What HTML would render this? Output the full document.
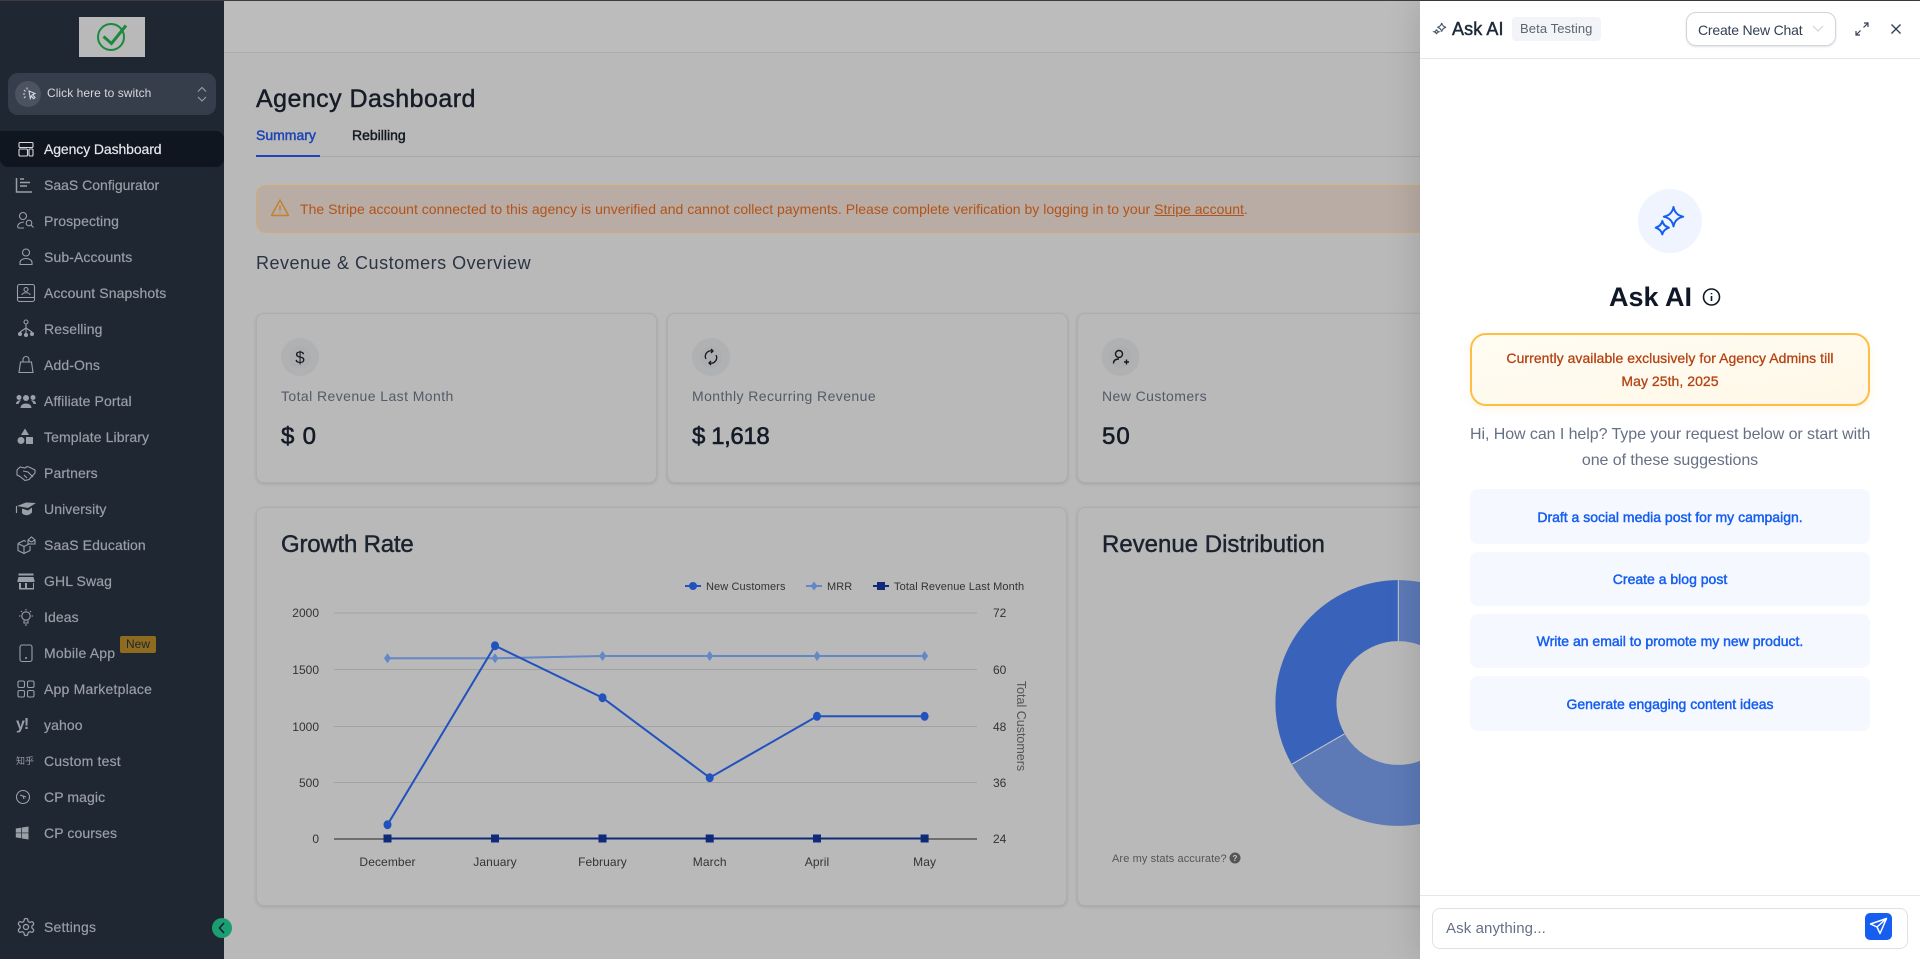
<!DOCTYPE html>
<html lang="en"><head><meta charset="utf-8"><title>Agency Dashboard</title>
<style>
*{box-sizing:border-box}
html,body{margin:0;padding:0;width:1920px;height:959px;overflow:hidden;background:#b9b9b9;font-family:"Liberation Sans",sans-serif}
.t{position:absolute;white-space:nowrap;line-height:20px;transform:translateY(-10px)}
.m{-webkit-text-stroke:.3px currentColor}
.box{position:absolute}
.nav{position:absolute;left:44px;font-size:14px;line-height:20px;color:#9a9ea6;white-space:nowrap;transform:translateY(-10px);letter-spacing:.1px;-webkit-text-stroke:.2px currentColor}
.card{position:absolute;background:#b9b9b9;border:1.5px solid #adadae;border-radius:8px;box-shadow:0 1px 3px rgba(0,0,0,.12)}
.lab{color:#535a68;font-size:14px;letter-spacing:.42px}
.val{color:#141b26;font-size:24px;-webkit-text-stroke:.6px currentColor}
.sug{position:absolute;left:1470px;width:400px;background:#f5f8ff;border-radius:8px;display:flex;align-items:center;justify-content:center;font-size:14px;color:#155eef;-webkit-text-stroke:.45px currentColor}
svg{position:absolute;overflow:visible}
</style></head><body>

<!-- main -->
<div class="box" style="left:224px;top:0;width:1200px;height:53px;background:#bcbcbc;border-bottom:1px solid #ababab"></div>
<div class="t" style="left:256px;top:99px;font-size:25px;color:#151c27;letter-spacing:.45px;-webkit-text-stroke:.45px currentColor">Agency Dashboard</div>
<div class="t" style="left:256px;top:135px;font-size:14px;color:#1d46b4;-webkit-text-stroke:.45px currentColor">Summary</div>
<div class="t" style="left:352px;top:135px;font-size:14px;color:#131a25;-webkit-text-stroke:.45px currentColor">Rebilling</div>
<div class="box" style="left:256px;top:156px;width:1170px;height:1px;background:#a6a8ae"></div>
<div class="box" style="left:256px;top:155px;width:64px;height:2px;background:#1d46b4"></div>

<div class="box" style="left:256px;top:185px;width:1180px;height:48px;background:#b8aca4;border:1px solid #d1ab72;border-radius:10px"></div>
<div class="t" id="al" style="left:300px;top:209px;font-size:14px;color:#b3531a;letter-spacing:.02px">The Stripe account connected to this agency is unverified and cannot collect payments. Please complete verification by logging in to your <u>Stripe account</u>.</div>
<div class="t" style="left:256px;top:263px;font-size:18px;color:#2b3444;letter-spacing:.5px">Revenue &amp; Customers Overview</div>

<div class="card" style="left:256px;top:313px;width:401px;height:170px"></div>
<div class="card" style="left:667px;top:313px;width:401px;height:170px"></div>
<div class="card" style="left:1077px;top:313px;width:420px;height:170px"></div>

<div class="t lab" style="left:281px;top:396px">Total Revenue Last Month</div>
<div class="t val" style="left:281px;top:436.500px;letter-spacing:.8px">$ 0</div>
<div class="t lab" style="left:692px;top:396px">Monthly Recurring Revenue</div>
<div class="t val" style="left:692px;top:436.500px;letter-spacing:-.4px">$ 1,618</div>
<div class="t lab" style="left:1102px;top:396px">New Customers</div>
<div class="t val" style="left:1102px;top:436.500px;letter-spacing:1px">50</div>

<div class="card" style="left:256px;top:507px;width:811px;height:399px"></div>
<div class="card" style="left:1077px;top:507px;width:420px;height:399px"></div>
<div class="t" style="left:281px;top:545px;font-size:24px;color:#1b232e;letter-spacing:-.2px;-webkit-text-stroke:.45px currentColor">Growth Rate</div>
<div class="t" style="left:1102px;top:545px;font-size:24px;color:#1b232e;-webkit-text-stroke:.45px currentColor">Revenue Distribution</div>

<svg width="1920" height="959" style="left:0;top:0" font-family="Liberation Sans, sans-serif">
 <!-- card icons -->
 <g><circle cx="300" cy="357" r="19" fill="#b0b1b3"/><circle cx="300" cy="357" r="11" fill="#adaeb0"/>
 <text x="300" y="363" font-size="17" text-anchor="middle" fill="#15191f">$</text></g>
 <g><circle cx="711" cy="357" r="19" fill="#b0b1b3"/><circle cx="711" cy="357" r="11" fill="#adaeb0"/>
 <path d="M706 359a5.500 5.500 0 0 1 6-8M716 355a5.500 5.500 0 0 1-6 8M711 349l2 2-2 2M711 361l-2 2 2 2" fill="none" stroke="#15191f" stroke-width="1.300"/></g>
 <g><circle cx="1120.500" cy="357" r="19" fill="#b0b1b3"/><circle cx="1120.500" cy="357" r="11" fill="#adaeb0"/>
 <circle cx="1119" cy="354" r="3.500" fill="none" stroke="#15191f" stroke-width="1.400"/><path d="M1113.500 363.500c0-3 2-4.500 5.500-4.500M1124 362h5M1126.500 359.500v5" fill="none" stroke="#15191f" stroke-width="1.400"/></g>
 <!-- alert icon -->
 <path d="M280 200l-8.500 15.500h17zM280 205.500v5M280 212.500v.8" fill="none" stroke="#c4802a" stroke-width="1.400" stroke-linejoin="round"/>

 <!-- chart -->
 <g stroke="#a2a2a2" stroke-width="1"><path d="M334 613H977M334 669.500H977M334 726.500H977M334 782.500H977"/></g>
 <path d="M334 839H977" stroke="#222" stroke-width="1"/>
 <g font-size="12" fill="#333" text-anchor="end"><text x="319" y="617">2000</text><text x="319" y="674">1500</text><text x="319" y="731">1000</text><text x="319" y="787">500</text><text x="319" y="843">0</text></g>
 <g font-size="12" fill="#333"><text x="993" y="617">72</text><text x="993" y="674">60</text><text x="993" y="731">48</text><text x="993" y="787">36</text><text x="993" y="843">24</text></g>
 <g font-size="12" fill="#333" text-anchor="middle" letter-spacing=".1"><text x="387.500" y="866">December</text><text x="495" y="866">January</text><text x="602.500" y="866">February</text><text x="709.700" y="866">March</text><text x="817" y="866">April</text><text x="924.600" y="866">May</text></g>
 <text transform="translate(1017,726) rotate(90)" font-size="12.500" fill="#555" text-anchor="middle">Total Customers</text>
 <polyline points="387.500,658.300 495,658.300 602.500,656 709.700,656 817,656 924.600,656" fill="none" stroke="#6488c7" stroke-width="2"/>
 <g fill="#6488c7"><path d="M387.500 653.300l3.500 5-3.500 5-3.500-5zM495 653.300l3.500 5-3.500 5-3.500-5zM602.500 651l3.500 5-3.500 5-3.500-5zM709.700 651l3.500 5-3.500 5-3.500-5zM817 651l3.500 5-3.500 5-3.500-5zM924.600 651l3.500 5-3.500 5-3.500-5z"/></g>
 <polyline points="387.500,824.700 495,645.700 602.500,697.700 709.700,777.700 817,716.300 924.600,716.300" fill="none" stroke="#2152bd" stroke-width="2"/>
 <g fill="#2152bd"><ellipse cx="387.500" cy="824.700" rx="4" ry="4.500"/><ellipse cx="495" cy="645.700" rx="4" ry="4.500"/><ellipse cx="602.500" cy="697.700" rx="4" ry="4.500"/><ellipse cx="709.700" cy="777.700" rx="4" ry="4.500"/><ellipse cx="817" cy="716.300" rx="4" ry="4.500"/><ellipse cx="924.600" cy="716.300" rx="4" ry="4.500"/></g>
 <path d="M387.500 838.500H924.600" stroke="#0e2a78" stroke-width="2"/>
 <g fill="#0e2a78"><rect x="383.500" y="834.500" width="8" height="8"/><rect x="491" y="834.500" width="8" height="8"/><rect x="598.500" y="834.500" width="8" height="8"/><rect x="705.700" y="834.500" width="8" height="8"/><rect x="813" y="834.500" width="8" height="8"/><rect x="920.600" y="834.500" width="8" height="8"/></g>
 <!-- legend -->
 <path d="M685 586h16" stroke="#2152bd" stroke-width="2"/><circle cx="693" cy="586" r="4" fill="#2152bd"/>
 <path d="M806 586h16" stroke="#6488c7" stroke-width="2"/><path d="M814 581.500l3.500 4.500-3.500 4.500-3.500-4.500z" fill="#6488c7"/>
 <path d="M873 586h16" stroke="#0e2a78" stroke-width="2"/><rect x="877" y="582" width="8" height="8" fill="#0e2a78"/>
 <g font-size="11" fill="#333" letter-spacing=".1"><text x="706" y="590">New Customers</text><text x="827" y="590">MRR</text><text x="894" y="590">Total Revenue Last Month</text></g>

 <!-- donut -->
 <circle cx="1398.300" cy="703" r="92.400" fill="none" stroke="#5d7ab7" stroke-width="61"/>
 <path d="M1398.300 580.300A122.700 122.700 0 0 0 1291.900 764.200L1344.600 733.800A62 62 0 0 1 1398.300 641Z" fill="#3963bb"/>
 <path d="M1398.300 580.300V641M1291.900 764.200L1344.600 733.800" stroke="#c9c9c9" stroke-width="1"/>
 <text x="1112" y="862" font-size="11" fill="#555" letter-spacing=".1">Are my stats accurate?</text>
 <circle cx="1235" cy="858" r="5.500" fill="#555"/><text x="1235" y="861" font-size="8" font-weight="700" fill="#c9c9c9" text-anchor="middle">?</text>
</svg>

<!-- sidebar -->
<div class="box" style="left:0;top:0;width:224px;height:959px;background:#1f2733"></div>
<div class="box" style="left:0;top:0;width:1920px;height:1px;background:#3c3c3c"></div>
<div class="box" style="left:79px;top:17px;width:66px;height:40px;background:#b9b9b9"></div>
<div class="box" style="left:8px;top:73px;width:208px;height:42px;background:#373e4b;border-radius:10px"></div>
<div class="box" style="left:15px;top:81px;width:26px;height:26px;background:#4b5260;border-radius:50%"></div>
<div class="t" style="left:47px;top:93px;font-size:12px;color:#d5d7db;letter-spacing:.05px">Click here to switch</div>
<div class="box" style="left:0;top:131px;width:224px;height:36px;background:#0f161f;border-radius:0 8px 8px 8px"></div>

<div class="nav" style="top:149px;color:#e5e7eb;letter-spacing:-.1px">Agency Dashboard</div>
<div class="nav" style="top:185px;letter-spacing:0">SaaS Configurator</div>
<div class="nav" style="top:221px">Prospecting</div>
<div class="nav" style="top:257px">Sub-Accounts</div>
<div class="nav" style="top:293px">Account Snapshots</div>
<div class="nav" style="top:329px">Reselling</div>
<div class="nav" style="top:365px">Add-Ons</div>
<div class="nav" style="top:401px">Affiliate Portal</div>
<div class="nav" style="top:437px">Template Library</div>
<div class="nav" style="top:473px">Partners</div>
<div class="nav" style="top:509px">University</div>
<div class="nav" style="top:545px">SaaS Education</div>
<div class="nav" style="top:581px">GHL Swag</div>
<div class="nav" style="top:617px">Ideas</div>
<div class="nav" style="top:653px;letter-spacing:.2px">Mobile App</div>
<div class="nav" style="top:689px;letter-spacing:.2px">App Marketplace</div>
<div class="nav" style="top:725px">yahoo</div>
<div class="nav" style="top:761px;letter-spacing:.2px">Custom test</div>
<div class="nav" style="top:797px">CP magic</div>
<div class="nav" style="top:833px">CP courses</div>
<div class="nav" style="top:927px;letter-spacing:.2px">Settings</div>
<div class="box" style="left:120px;top:636px;width:36px;height:17px;background:#8e6b1e;border-radius:2px;color:#1f2733;font-size:12px;line-height:16px;text-align:center">New</div>
<div class="t" style="left:16px;top:725px;font-size:16px;font-weight:700;color:#9a9ea6;letter-spacing:-1px">y!</div>
<div class="t" style="left:16px;top:761px;font-size:9px;color:#9a9ea6;font-family:'Liberation Sans','Noto Sans CJK SC',sans-serif">知乎</div>

<svg width="240" height="959" style="left:0;top:0">
 <circle cx="111" cy="37" r="13" fill="none" stroke="#1a8a3f" stroke-width="2"/>
 <path d="M103.500 36.500l8 7L126 25.500" fill="none" stroke="#1a8a3f" stroke-width="3"/>
 <g fill="none" stroke="#d5d7db" stroke-width="1.100"><path d="M29 91l6 2.500-2.500 1.200 2.500 2.800-1.500 1.200-2.200-2.800-1 2.500zM24 90l1.500 1.500M23 94h2M27 87.500v2M24 98l1.500-1.500"/>
 <path d="M198 91.500l4-4 4 4M198 97l4 4 4-4" stroke="#9a9ea6"/></g>
 <g fill="none" stroke="#9aa0a8" stroke-width="1.100">
  <g transform="translate(26,149)" stroke="#d5d7db"><rect x="-7" y="-6.500" width="14" height="5" rx="1"/><rect x="-7" y="0" width="8.500" height="7" rx="1"/><rect x="3" y="0" width="4" height="7" rx="1"/></g>
  <g transform="translate(24,185)"><path d="M-7.500-7V7H8M-4-6h4M-4-2.500H6M-4 1h7" stroke-width="1.500"/></g>
  <g transform="translate(26,221)"><circle cx="-3" cy="-5" r="3.500"/><path d="M-2 7H-7c-1.500 0-1.500-1.500-1-3 1-2 4-3 6-3"/><circle cx="3" cy="2" r="2.800"/><path d="M5 4l2.500 2.500"/></g>
  <g transform="translate(26,257)"><circle cx="0" cy="-4.500" r="3.500"/><path d="M-6 7.500V5.500c0-2.500 3-4 6-4s6 1.500 6 4v2z"/></g>
  <g transform="translate(26,293)"><rect x="-8.500" y="-8.500" width="17" height="17" rx="2"/><path d="M-8.500 4.500h17M-4 2c0-3 8-3 8 0"/><circle cx="0" cy="-3.500" r="2"/></g>
  <g transform="translate(26,329)"><circle cx="0" cy="-7" r="2"/><path d="M0-5V5M0-1l-6 4M0-1l6 4"/><circle cx="-6" cy="5" r="1.500" fill="#9aa0a8"/><circle cx="0" cy="6" r="1.500" fill="#9aa0a8"/><circle cx="6" cy="5" r="1.500" fill="#9aa0a8"/></g>
  <g transform="translate(26,365)"><path d="M-5.500-3h11l1.500 10.500h-14zM-3-3v-2.500a3 3 0 0 1 6 0V-3"/></g>
  <g transform="translate(26,473)"><path d="M-9-3l3-3 5 1 2-1.500 3 1 5 2.500v3L3 6.500-1 7.500-6 3.500-9 2zM-3-2l5 1 5 5M-2 2l3 3"/></g>
  <g transform="translate(26,545)"><path d="M-8-1.500l6-3 2 1M-8-1.500v7l6 3 6-3V1M-8-1.500l6 3 6-3M-2 1.500v7M2-5l3.500-3 3.500 3v4h-7zM2-5l3.500 2L9-5"/></g>
  <g transform="translate(26,617)"><circle cx="0" cy="-1" r="4.200"/><path d="M-2 3.500V6h4V3.500M0-8v1.500M-7-1h1.500M7-1H5.500M-5-6l1 1M5-6l-1 1M-1 8h2"/></g>
  <g transform="translate(26,653)"><rect x="-6" y="-8" width="12" height="16.500" rx="2"/><circle cx="0" cy="5" r=".5" fill="#9aa0a8"/></g>
  <g transform="translate(26,689)"><rect x="-8" y="-8" width="6.500" height="6.500" rx="1.500"/><rect x="1.500" y="-8" width="6.500" height="6.500" rx="1.500"/><rect x="-8" y="1.500" width="6.500" height="6.500" rx="1.500"/><rect x="1.500" y="1.500" width="6.500" height="6.500" rx="1.500"/></g>
  <g transform="translate(23,797)"><circle cx="0" cy="0" r="6.500"/><path d="M-3-2l6 2M0-1l1 3"/></g>
 </g>
 <g fill="#9aa0a8">
  <g transform="translate(26,401)"><circle cx="0" cy="-3" r="3"/><circle cx="-7" cy="-3.500" r="2.500"/><circle cx="7" cy="-3.500" r="2.500"/><path d="M-5.500 7c0-6 11-6 11 0zM-10 3c0-3 3-4 5-3.500-1.500 1-2 2-2.500 3.500zM10 3c0-3-3-4-5-3.500 1.500 1 2 2 2.500 3.500z"/></g>
  <g transform="translate(25,437)"><path d="M0-8.500L4-2H-4z"/><circle cx="-4" cy="3.500" r="3.500"/><rect x="1" y="0" width="7" height="7" rx=".5"/></g>
  <g transform="translate(26,509)"><path d="M-9-3L0-6.500 10-6 2-1zM-4-.5L2 1.500 6-1.500V3.500C3 7-2 7-4 4z"/><path d="M-9.500-3V4" stroke="#9aa0a8" stroke-width="1.200"/></g>
  <g transform="translate(26,581)"><rect x="-7.500" y="-7.500" width="15" height="2"/><path d="M-7.500-4h15l1 3.500V1h-17V-.5zM-7 2h2V7h4V2h2V7h6V2h1V8.500H-7z"/></g>
  <g transform="translate(22,833)"><path d="M-6.200-4.500l5.500-.9V-.4h-5.500zM0-5.500l6.500-1V-.4H0zM-6.200.3h5.500v5l-5.500-.9zM0 .3h6.500v6.200l-6.500-1z"/></g>
 </g>
 <g transform="translate(15.800,916.800) scale(.85)" fill="none" stroke="#9aa0a8" stroke-width="1.500"><path d="M12.220 2h-.44a2 2 0 0 0-2 2v.18a2 2 0 0 1-1 1.730l-.43.25a2 2 0 0 1-2 0l-.15-.08a2 2 0 0 0-2.730.73l-.22.38a2 2 0 0 0 .73 2.730l.15.1a2 2 0 0 1 1 1.720v.51a2 2 0 0 1-1 1.740l-.15.09a2 2 0 0 0-.73 2.730l.22.38a2 2 0 0 0 2.730.73l.15-.08a2 2 0 0 1 2 0l.43.25a2 2 0 0 1 1 1.730V20a2 2 0 0 0 2 2h.44a2 2 0 0 0 2-2v-.18a2 2 0 0 1 1-1.730l.43-.25a2 2 0 0 1 2 0l.15.08a2 2 0 0 0 2.730-.73l.22-.39a2 2 0 0 0-.73-2.730l-.15-.08a2 2 0 0 1-1-1.740v-.5a2 2 0 0 1 1-1.740l.15-.09a2 2 0 0 0 .73-2.730l-.22-.38a2 2 0 0 0-2.730-.73l-.15.08a2 2 0 0 1-2 0l-.43-.25a2 2 0 0 1-1-1.730V4a2 2 0 0 0-2-2z"/><circle cx="12" cy="12" r="3"/></g>
 <circle cx="222" cy="928" r="10" fill="#1b9e72"/><path d="M224 923l-4.500 5 4.500 5" fill="none" stroke="#123" stroke-width="1.600"/>
</svg>

<!-- panel -->
<div class="box" style="left:1420px;top:1px;width:500px;height:958px;background:#fff;box-shadow:-4px 0 30px rgba(0,0,0,.12)"></div>
<div class="box" style="left:1420px;top:58px;width:500px;height:1px;background:#e5e7eb"></div>
<div class="t" style="left:1452px;top:29px;font-size:18px;color:#1d2939;letter-spacing:.1px;-webkit-text-stroke:.45px currentColor">Ask AI</div>
<div class="box" style="left:1512px;top:17px;width:89px;height:24px;background:#f2f4f7;border-radius:4px"></div>
<div class="t" style="left:1520px;top:29px;font-size:13px;color:#5c6573;letter-spacing:.1px">Beta Testing</div>
<div class="box" style="left:1686px;top:12px;width:150px;height:34px;border:1px solid #d0d5dd;border-radius:10px;box-shadow:0 1px 2px rgba(16,24,40,.12)"></div>
<div class="t" style="left:1698px;top:29.500px;font-size:14px;color:#344054;letter-spacing:-.2px">Create New Chat</div>
<div class="box" style="left:1638px;top:189px;width:64px;height:64px;border-radius:50%;background:#eff4ff"></div>
<div class="t" style="left:1609px;top:297px;font-size:27px;font-weight:700;color:#101828;line-height:30px;transform:translateY(-15px)">Ask AI</div>
<div class="box" style="left:1470px;top:333px;width:400px;height:73px;background:linear-gradient(170deg,#fffcf3,#fff8e8);border:2px solid #fdbe46;border-radius:16px;box-shadow:0 3px 8px rgba(253,190,70,.15)"></div>
<div class="t m" style="left:1470px;width:400px;top:358px;text-align:center;font-size:14px;color:#b54212;letter-spacing:.05px">Currently available exclusively for Agency Admins till</div>
<div class="t m" style="left:1470px;width:400px;top:381px;text-align:center;font-size:14px;color:#b54212;letter-spacing:.05px">May 25th, 2025</div>
<div class="t" style="left:1470px;width:400px;top:434.500px;text-align:center;font-size:16px;color:#667085;letter-spacing:-.07px">Hi, How can I help? Type your request below or start with</div>
<div class="t" style="left:1470px;width:400px;top:460.500px;text-align:center;font-size:16px;color:#667085;letter-spacing:-.07px">one of these suggestions</div>
<div class="sug" style="top:489px;height:55px">Draft a social media post for my campaign.</div>
<div class="sug" style="top:552px;height:54px">Create a blog post</div>
<div class="sug" style="top:614px;height:54px">Write an email to promote my new product.</div>
<div class="sug" style="top:676px;height:55px">Generate engaging content ideas</div>
<div class="box" style="left:1420px;top:895px;width:500px;height:1px;background:#e5e7eb"></div>
<div class="box" style="left:1432px;top:908px;width:476px;height:41px;border:1px solid #dfe1e6;border-radius:8px"></div>
<div class="t" style="left:1446px;top:929px;font-size:15px;color:#667085;letter-spacing:.1px">Ask anything...</div>
<div class="box" style="left:1865px;top:913px;width:27px;height:27px;background:#155eef;border-radius:5px"></div>

<svg width="1920" height="959" style="left:0;top:0">
 <g fill="none" stroke="#475467" stroke-width="1.100"><path d="M1441.700 23q.8 3.500 4.300 4.300-3.500.8-4.300 4.300-.8-3.500-4.300-4.300 3.500-.8 4.300-4.300zM1436.500 29.500q.4 1.800 2.300 2.300-1.900.5-2.300 2.300-.4-1.800-2.300-2.300 1.900-.5 2.300-2.300z"/></g>
 <path d="M1813 26l5 5 5-5" fill="none" stroke="#d0d5dd" stroke-width="1.200"/>
 <path d="M1863.500 27.500l4-4M1864 23h4v4M1860.500 30.500l-4 4M1856 31v4h4" fill="none" stroke="#344054" stroke-width="1.200"/>
 <path d="M1891.500 24.500l9 9M1900.500 24.500l-9 9" fill="none" stroke="#344054" stroke-width="1.400"/>
 <g fill="none" stroke="#155eef" stroke-width="2" stroke-linejoin="round"><path d="M1673.500 207q1.500 8 9.700 9.700-8.200 1.700-9.700 9.700-1.500-8-9.700-9.700 8.200-1.700 9.700-9.700z"/><path d="M1662.300 221q1 4.800 6.600 6.700-5.600 1.900-6.600 6.700-1-4.800-6.600-6.700 5.600-1.900 6.600-6.700z"/></g>
 <circle cx="1711.500" cy="297" r="8" fill="none" stroke="#101828" stroke-width="1.600"/><path d="M1711.500 296v5M1711.500 293v1.200" stroke="#101828" stroke-width="1.600"/>
 <path d="M1886.500 918.500l-16 5.500 6.500 3 3 6.500zM1886.500 918.500l-9.500 8.500" fill="none" stroke="#fff" stroke-width="1.500" stroke-linejoin="round"/>
</svg>
</body></html>
